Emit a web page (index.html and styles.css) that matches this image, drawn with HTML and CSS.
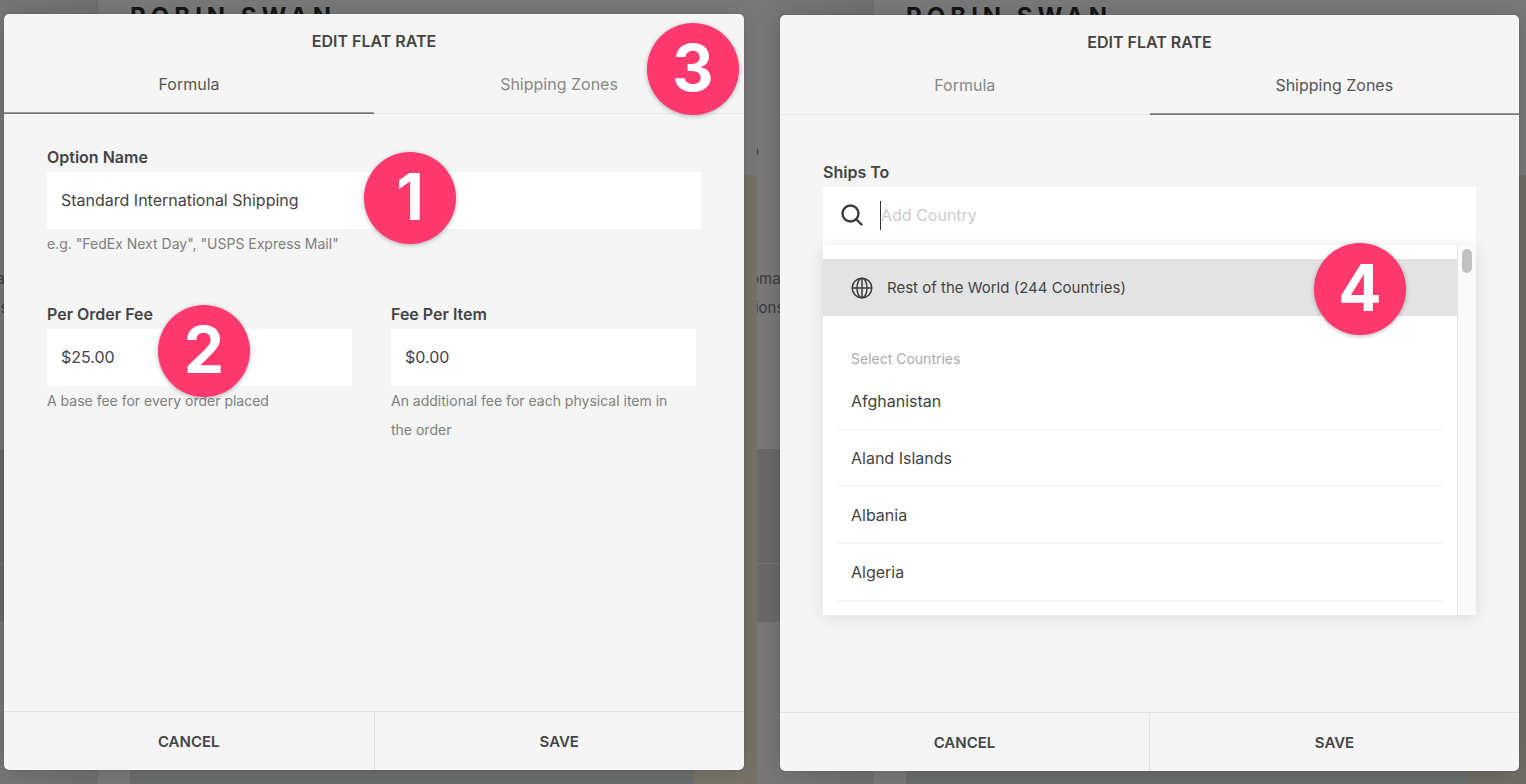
FILE: index.html
```html
<!DOCTYPE html>
<html lang="en">
<head>
<meta charset="utf-8">
<title>Edit Flat Rate</title>
<link rel="stylesheet" href="styles.css">
</head>
<body>
<main class="steps">
  <section class="scene scene-formula">
    <div class="site" aria-hidden="true">
      <div class="site-side">
        <p class="site-note">o</p>
        <p class="site-text">oma<br>tions</p>
        <div class="site-row"></div>
        <div class="site-row site-row-short"></div>
      </div>
      <div class="site-page">
        <p class="site-title">ROBIN SWAN</p>
        <div class="site-photo"></div>
      </div>
    </div>
    <form class="modal">
      <h2 class="modal-title">EDIT FLAT RATE</h2>
      <div class="tabs">
        <button type="button" class="tab tab-active">Formula</button>
        <button type="button" class="tab">Shipping Zones</button>
      </div>
      <div class="modal-body">
        <div class="field">
          <label class="label" for="option-name">Option Name</label>
          <input class="input" id="option-name" type="text" value="Standard International Shipping">
          <p class="hint">e.g. "FedEx Next Day", "USPS Express Mail"</p>
        </div>
        <div class="fees">
          <div class="field">
            <label class="label" for="order-fee">Per Order Fee</label>
            <input class="input" id="order-fee" type="text" value="$25.00">
            <p class="hint">A base fee for every order placed</p>
          </div>
          <div class="field">
            <label class="label" for="item-fee">Fee Per Item</label>
            <input class="input" id="item-fee" type="text" value="$0.00">
            <p class="hint">An additional fee for each physical item in the order</p>
          </div>
        </div>
      </div>
      <div class="modal-footer">
        <button type="button" class="action">CANCEL</button>
        <button type="button" class="action">SAVE</button>
      </div>
      <span class="badge badge-1">1</span>
      <span class="badge badge-2">2</span>
      <span class="badge badge-3">3</span>
    </form>
  </section>

  <section class="scene scene-zones">
    <div class="site" aria-hidden="true">
      <div class="site-side">
        <p class="site-note">o</p>
        <p class="site-text">oma<br>tions</p>
        <div class="site-row"></div>
        <div class="site-row site-row-short"></div>
      </div>
      <div class="site-page">
        <p class="site-title">ROBIN SWAN</p>
        <div class="site-photo"></div>
      </div>
    </div>
    <form class="modal">
      <h2 class="modal-title">EDIT FLAT RATE</h2>
      <div class="tabs">
        <button type="button" class="tab">Formula</button>
        <button type="button" class="tab tab-active">Shipping Zones</button>
      </div>
      <div class="modal-body modal-body-zones">
        <label class="label" for="country">Ships To</label>
        <div class="search">
          <svg class="search-icon" viewBox="0 0 22 22" aria-hidden="true"><circle cx="9.500" cy="9.500" r="8"/><path d="M15.500 15.500 20.500 20.500"/></svg>
          <span class="caret"></span>
          <input class="search-input" id="country" type="text" placeholder="Add Country">
          <div class="menu">
            <div class="menu-list">
              <button type="button" class="world">
                <svg class="globe" viewBox="0 0 22 22" aria-hidden="true"><circle cx="11" cy="11" r="9.800"/><ellipse cx="11" cy="11" rx="5" ry="9.800"/><path d="M11 1.200v19.600M1.200 11h19.600"/></svg>
                Rest of the World (244 Countries)
              </button>
              <p class="menu-heading">Select Countries</p>
              <ul class="countries">
                <li class="country">Afghanistan</li>
                <li class="country">Aland Islands</li>
                <li class="country">Albania</li>
                <li class="country">Algeria</li>
              </ul>
            </div>
            <div class="scroll-track"><div class="scroll-thumb"></div></div>
          </div>
        </div>
      </div>
      <div class="modal-footer">
        <button type="button" class="action">CANCEL</button>
        <button type="button" class="action">SAVE</button>
      </div>
      <span class="badge badge-4">4</span>
    </form>
  </section>
</main>
</body>
</html>
```
FILE: styles.css
```css
* { box-sizing: border-box; }

body,
h2,
p,
ul { margin: 0; padding: 0; }

body,
button,
input {
  font-family: Inter, "Liberation Sans", sans-serif;
  font-size: 16px;
  color: #444;
}

button {
  border: 0;
  padding: 0;
  background: none;
  cursor: pointer;
}

.steps {
  display: grid;
  grid-template-columns: 757fr 769fr;
  min-height: 100vh;
}

.scene {
  position: relative;
  display: flex;
  overflow: hidden;
  background: #777;
}

.scene-formula { padding: 14px 13px 14px 4px; }
.scene-zones { padding: 14px 7px 14px 23px; }

/* dimmed site behind the dialog */
.site {
  position: absolute;
  inset: 0;
  display: flex;
}

.scene-formula .site { left: -19px; }

.site-side {
  width: 117px;
  padding-top: 136px;
  background: linear-gradient(to right, #797979, #707070);
}

.site-note,
.site-text {
  margin-left: -7px;
  font-size: 15px;
  line-height: 29px;
  color: #3c3c3c;
}

.site-note { margin-bottom: 99px; }
.site-text { margin-bottom: 127px; }

.site-row {
  height: 115px;
  border-bottom: 1px solid #777;
  background: #696969;
}

.site-row-short { height: 59px; }

.site-page {
  flex: 1;
  display: flex;
  flex-direction: column;
  background: #7a7a7a;
}

.site-title {
  height: 175px;
  padding-left: 32px;
  font-size: 24px;
  line-height: 34px;
  font-weight: 700;
  letter-spacing: 5px;
  color: #161616;
}

.site-photo {
  flex: 1;
  margin-left: 32px;
  background: linear-gradient(to left, #78746a 64px, #6c6f6e 64px);
}

.scene-zones .site-photo { background: linear-gradient(to left, #716d66 58px, #6c6e6d 58px); }

.modal {
  position: relative;
  flex: 1;
  display: flex;
  flex-direction: column;
  border-radius: 5px;
  background: #f5f5f5;
  box-shadow: 0 2px 28px rgba(0, 0, 0, 0.16), 0 0 1px rgba(0, 0, 0, 0.4);
}

.scene-zones .modal { margin: 1px 0 -1px; }

.modal-title {
  font-size: 16px;
  line-height: 55px;
  font-weight: 600;
  text-align: center;
}

.tabs { display: flex; }

.tab {
  flex: 1;
  padding-bottom: 14px;
  border-bottom: 1px solid #e8e8e8;
  line-height: 30px;
  color: #888;
}

.tab-active {
  border-color: #777;
  box-shadow: inset 0 -1px #999;
  color: #555;
}

.modal-body {
  flex: 1;
  display: flex;
  flex-direction: column;
  gap: 42px;
  padding: 29px 43px;
}

.modal-body-zones {
  gap: 0;
  padding-top: 43px;
}

.field {
  display: flex;
  flex-direction: column;
}

.fees {
  display: grid;
  grid-template-columns: 1fr 1fr;
  gap: 39px;
  padding-right: 5px;
}

.label {
  line-height: 29px;
  font-weight: 600;
}

.input {
  width: 100%;
  height: 57px;
  padding: 0 14px 2px;
  border: 0;
  background: #fff;
}

.hint {
  padding-right: 14px;
  font-size: 14px;
  line-height: 29px;
  color: #808080;
}

.modal-footer {
  display: flex;
  border-top: 1px solid #e3e3e3;
}

.action {
  flex: 1;
  height: 58px;
  font-size: 15px;
  font-weight: 600;
}

.action + .action { border-left: 1px solid #e3e3e3; }

.search {
  position: relative;
  display: flex;
  align-items: center;
  height: 58px;
  padding: 0 0 2px 18px;
  background: #fff;
}

.search-icon,
.globe {
  width: 22px;
  height: 22px;
  fill: none;
  stroke: #3c3c3c;
}

.search-icon {
  stroke-width: 2.4;
  stroke-linecap: round;
}

.globe { stroke-width: 1.5; }

.caret {
  width: 1px;
  height: 29px;
  margin-left: 17px;
  background: #333;
}

.search-input {
  flex: 1;
  padding: 0;
  border: 0;
  background: none;
}

.search-input::placeholder { color: #ccc; }

.menu {
  position: absolute;
  top: 100%;
  left: 0;
  right: 0;
  display: flex;
  background: #fff;
  box-shadow: 0 2px 16px rgba(0, 0, 0, 0.1);
}

.menu-list {
  flex: 1;
  padding: 14px 0;
}

.world {
  display: flex;
  align-items: center;
  gap: 14px;
  width: 100%;
  height: 57px;
  padding: 0 28px;
  font-size: 15px;
  background: #e3e3e3;
}

.menu-heading {
  padding: 28px 28px 0;
  font-size: 14px;
  line-height: 29px;
  color: #aaa;
}

.countries {
  padding: 0 14px;
  list-style: none;
}

.country {
  padding: 0 14px;
  border-bottom: 1px solid #f3f3f3;
  line-height: 56px;
}

.scroll-track {
  width: 19px;
  padding: 4px;
  border-left: 1px solid #e6e6e6;
  background: #fafafa;
}

.scroll-thumb {
  height: 24px;
  border-radius: 5px;
  background: #c1c1c1;
}

/* numbered callouts over the dialogs */
.badge {
  position: absolute;
  width: 92px;
  height: 92px;
  border-radius: 50%;
  background: #ff386d;
  box-shadow: 0 1px 4px rgba(0, 0, 0, 0.3);
  font-size: 64px;
  line-height: 90px;
  font-weight: 700;
  text-align: center;
  color: #fff;
}

.badge-1 { top: 138px; left: 360px; }
.badge-2 { top: 291px; left: 154px; }
.badge-3 { top: 9px; right: 5px; }
.badge-4 { top: 228px; right: 113px; }
```
